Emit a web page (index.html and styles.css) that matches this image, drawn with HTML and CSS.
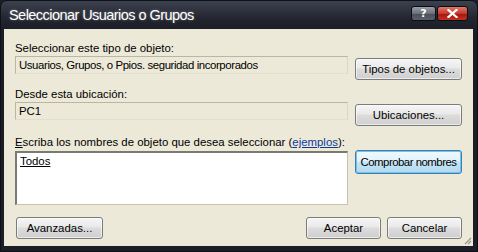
FILE: index.html
```html
<!DOCTYPE html>
<html lang="es">
<head>
<meta charset="utf-8">
<title>Seleccionar Usuarios o Grupos</title>
<link rel="stylesheet" href="styles.css">
</head>
<body>
<div class="window">
  <div class="titlebar">
    <span class="title">Seleccionar Usuarios o Grupos</span>
    <div class="ctrls">
      <span class="cbtn help">?</span>
      <span class="cbtn close"><svg width="11" height="9" viewBox="0 0 11 9"><path d="M1.5 1 L9.5 8 M9.5 1 L1.5 8" stroke="#fff" stroke-width="2.2" stroke-linecap="square"/></svg></span>
    </div>
  </div>
  <div class="body">
    <div class="section s1">
      <div class="label">Seleccionar este tipo de objeto:</div>
      <div class="field tight">Usuarios, Grupos, o Ppios. seguridad incorporados</div>
      <div class="btn side">Tipos de objetos...</div>
    </div>
    <div class="section s2">
      <div class="label">Desde esta ubicación:</div>
      <div class="field">PC1</div>
      <div class="btn side">Ubicaciones...</div>
    </div>
    <div class="section s3">
      <div class="label"><u>E</u>scriba los nombres de objeto que desea seleccionar (<a class="link">ejemplos</a>):</div>
      <div class="textarea"><u>Todos</u></div>
      <div class="btn side default">Comprobar nombres</div>
    </div>
    <div class="footer">
      <div class="btn adv">Avanzadas...</div>
      <div class="spacer"></div>
      <div class="btn ok">Aceptar</div>
      <div class="btn cancel">Cancelar</div>
    </div>
    <svg class="grip" width="8" height="8" viewBox="0 0 8 8"><path d="M7 1 L1 7 M7 4 L4 7" stroke="#9a978a" stroke-width="1.2"/></svg>
  </div>
</div>
</body>
</html>
```
FILE: styles.css
```css
* { box-sizing: border-box; }
html, body { margin: 0; padding: 0; background: #1b1e27; }
body { width: 478px; height: 252px; overflow: hidden; font-family: "Liberation Sans", Arial, sans-serif; font-size: 11.4px; color: #000; }
.window {
  width: 478px; height: 252px;
  background: linear-gradient(#3c414f 0px, #22252f 18px, #1a1d25 30px, #1b1e27 100%);
  border-radius: 7px 7px 0 0;
  border: 1px solid #0e1016;
  padding: 0 4px 5px 3px;
  display: flex; flex-direction: column;
}
.titlebar {
  height: 28px; flex: none;
  display: flex; align-items: center;
  padding: 0 4px 0 5px;
}
.title {
  font-family: "Liberation Sans", sans-serif; font-size: 14.5px; color: #fff; letter-spacing: -0.55px;
  text-shadow: 0 0 3px rgba(255,255,255,0.35);
}
.ctrls { margin-left: auto; display: flex; gap: 1px; margin-top: -4px; margin-right: 1px; }
.cbtn {
  height: 15px; display: flex; align-items: center; justify-content: center;
  border: 1px solid #0c0d12; border-radius: 3px; color: #fff; font-family: "DejaVu Sans", sans-serif; font-weight: bold; font-size: 11px;
}
.help { width: 25px; background: linear-gradient(#9a9ea8, #6a6e78 50%, #4a4e58 51%, #5c606a); }
.close { width: 31px; background: linear-gradient(#e0786c, #c33a2c 50%, #a3160c 51%, #c23222); }
.body {
  flex: 1; background: #ece9d8; position: relative;
  padding: 12px 11px 0 11px;
}
.section {
  display: grid; grid-template-columns: 333px 107px; column-gap: 7px;
}
.label { grid-column: 1; line-height: 14px; height: 14px; white-space: nowrap; }
.field {
  grid-column: 1; height: 18px; margin-top: 1px;
  border: 1px solid #b9b6a6; border-right-color: #d9d6c6; border-bottom-color: #e2dfcf;
  padding: 1px 0 0 3px; line-height: 14px; background: #ece9d8;
}
.field.tight { letter-spacing: -0.4px; }
.side { grid-column: 2; grid-row: 2; align-self: start; margin-top: 3px; }
.btn {
  height: 22px; display: flex; align-items: center; justify-content: center; white-space: nowrap;
  border: 1px solid #7b7b7b; border-radius: 3px;
  background: linear-gradient(#f6f6f6, #e9e9e9 45%, #dcdcdc 50%, #cfcfcf);
  box-shadow: inset 0 0 0 1px rgba(255,255,255,0.6);
  color: #000;
}
.btn.default {
  border-color: #3c7fb1;
  background: linear-gradient(#f0f9fe, #e3f3fc 45%, #c4e5f6 50%, #b3d9ef);
  box-shadow: inset 0 0 0 1px #74c0e8;
  height: 24px; margin-top: 1px;
  letter-spacing: -0.5px;
}
.s2 { margin-top: 7px; }
.s3 { margin-top: 9px; }
.textarea {
  grid-column: 1; height: 54px; margin-top: 2px;
  background: #fff;
  border: 1px solid #c6c3b3; border-top: 2px solid #7b7a72; border-left: 2px solid #7b7a72;
  padding: 1px 0 0 3px; line-height: 14px;
}
.link { color: #0b3a9d; text-decoration: underline; }
.footer { display: flex; margin-top: 12px; gap: 6px; }
.adv { width: 87px; margin-left: 1px; }
.spacer { flex: 1; }
.ok, .cancel { width: 75px; }
.grip { position: absolute; right: 1px; bottom: 1px; }
```
